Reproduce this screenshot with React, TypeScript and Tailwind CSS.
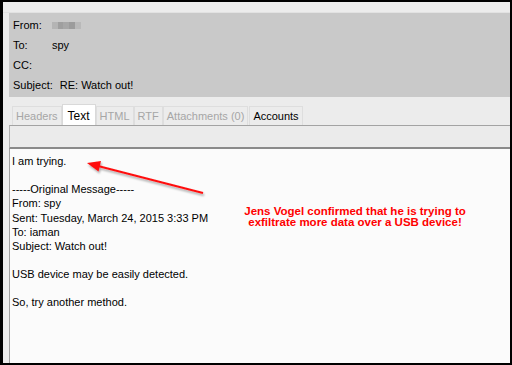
import React from 'react';

const font = { fontFamily: '"Liberation Sans", Arial, sans-serif' };

const HeaderRow: React.FC<{ label: string; children?: React.ReactNode }> = ({ label, children }) => (
  <div className="flex items-center h-[20px]">
    <span className="min-w-[39px] pr-[7px]">{label}</span>
    {children}
  </div>
);

const Tab: React.FC<{ label: string; active?: boolean; dark?: boolean }> = ({ label, active, dark }) =>
  active ? (
    <div className="h-[22px] mb-[-1px] px-[5px] flex items-center bg-white border border-[#d9d9d9] border-b-0 text-[12px] text-black">
      {label}
    </div>
  ) : (
    <div
      className={`h-[19px] px-[3px] flex items-center border border-[#dedede] border-b-0 bg-[#ececec] ${
        dark ? 'text-black' : 'text-[#a6a6a6]'
      }`}
    >
      {label}
    </div>
  );

export default function App() {
  const body = [
    'I am trying.',
    '',
    '-----Original Message-----',
    'From: spy',
    'Sent: Tuesday, March 24, 2015 3:33 PM',
    'To: iaman',
    'Subject: Watch out!',
    '',
    'USB device may be easily detected.',
    '',
    'So, try another method.',
  ];

  return (
    <div
      className="relative w-[512px] h-[365px] border-t-2 border-l-[3px] border-r-2 border-b-2 border-black bg-[#ececec] flex flex-col text-[11px] text-black overflow-hidden"
      style={font}
    >
      {/* top strip */}
      <div className="h-[11px] border-b border-[#e2e2e2]" />

      {/* header panel */}
      <div className="ml-[6px] h-[84px] bg-[#c9c9c9] pl-[4px] pt-[2px]">
        <HeaderRow label="From:">
          <div className="flex h-[7px]">
            <div className="w-[6px] bg-[#b4b4b4]" />
            <div className="w-[5px] bg-[#9f9f9f]" />
            <div className="w-[6px] bg-[#a7a7a7]" />
            <div className="w-[6px] bg-[#9c9c9c]" />
            <div className="w-[6px] bg-[#b9b9b9]" />
          </div>
        </HeaderRow>
        <HeaderRow label="To:">spy</HeaderRow>
        <HeaderRow label="CC:" />
        <HeaderRow label="Subject:">RE: Watch out!</HeaderRow>
      </div>

      {/* tabs */}
      <div className="h-[28px] pl-[9px] flex items-end">
        <Tab label="Headers" />
        <Tab label="Text" active />
        <Tab label="HTML" />
        <Tab label="RTF" />
        <Tab label="Attachments (0)" />
        <div className="w-[1px]" />
        <Tab label="Accounts" dark />
      </div>

      {/* toolbar */}
      <div className="ml-[6px] h-[24px] border-t border-[#a3a3a3] border-l border-l-[#b0b0b0] border-b-2 border-b-[#8a8a8a] bg-[#ebebeb]" />

      {/* message body */}
      <div className="ml-[6px] flex-1 bg-[#fbfbfb] border-l border-[#a0a0a0] pl-[2px] pt-[5px] leading-[14.15px]">
        {body.map((line, i) => (
          <div key={i} className="h-[14.15px] whitespace-pre">
            {line}
          </div>
        ))}
      </div>

      {/* annotation arrow */}
      <svg className="absolute left-[-3px] top-[-2px] pointer-events-none" width="512" height="365">
        <defs>
          <filter id="sh" x="-20%" y="-50%" width="140%" height="200%">
            <feDropShadow dx="1" dy="2" stdDeviation="1" floodColor="#000" floodOpacity="0.35" />
          </filter>
        </defs>
        <g filter="url(#sh)">
          <line x1="203" y1="193" x2="98" y2="166" stroke="#ff1010" strokeWidth="2" />
          <polygon points="87,163 101,161 98.5,171.5" fill="#ff1010" />
        </g>
      </svg>

      {/* annotation text */}
      <div className="absolute left-[232px] top-[204px] w-[240px] text-center text-[11.5px] leading-[11px] font-bold text-[#ff0000]">
        Jens Vogel confirmed that he is trying to
        <br />
        exfiltrate more data over a USB device!
      </div>
    </div>
  );
}
